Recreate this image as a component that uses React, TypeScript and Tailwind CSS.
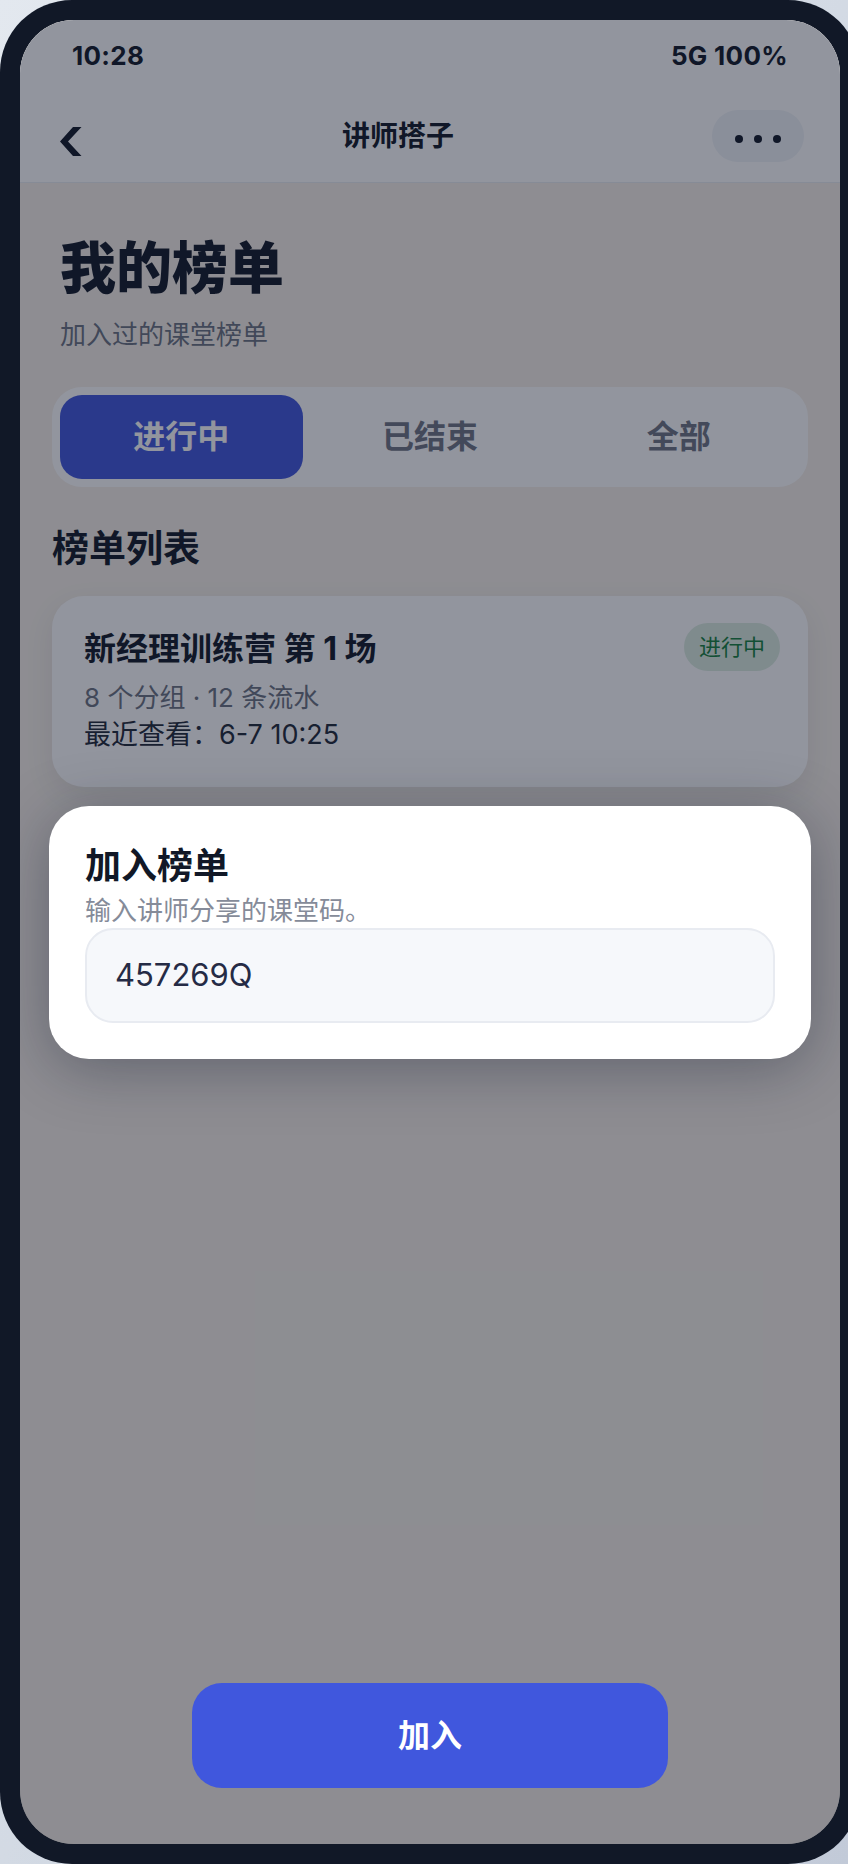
export default function App() {
  return (
    <div className="w-[848px] h-[1864px] overflow-hidden bg-gradient-to-br from-[#e3e8ef] via-[#d3dae4] to-[#c2cad8] [font-family:Inter,'Noto_Sans_CJK_SC',sans-serif]">
      <div className="w-[860px] h-[1864px] rounded-[72px] bg-[#111827] p-[20px]">
        <div className="relative h-full w-full overflow-hidden rounded-[54px] bg-[#f7f1e9]">
          {/* header */}
          <div className="bg-white border-b border-[#e9ecf1]">
            <div className="h-[70px] px-[52px] flex items-center justify-between text-[26px] tracking-[0.3px] font-bold text-[#111827]">
              <span>10:28</span>
              <span>5G 100%</span>
            </div>
            <div className="h-[92px] flex items-center pl-[40px] pr-[36px]">
              <div className="w-[24px] flex items-center">
                <svg width="22" height="30" viewBox="0 0 22 30" className="translate-y-[6px]">
                  <polygon points="13,0 21.5,0 8,14.5 21.5,29 13,29 0,14.5" fill="#111827" />
                </svg>
              </div>
              <div className="flex-1 text-center text-[28px] leading-[36px] font-bold text-[#111827]">讲师搭子</div>
              <div className="w-[92px] h-[52px] rounded-full bg-[#f1f4f8] flex items-center justify-center gap-[11px] pt-[5px]">
                <span className="w-[8px] h-[8px] rounded-full bg-[#111827]" />
                <span className="w-[8px] h-[8px] rounded-full bg-[#111827]" />
                <span className="w-[8px] h-[8px] rounded-full bg-[#111827]" />
              </div>
            </div>
          </div>

          {/* content */}
          <div className="px-[32px]">
            <div className="px-[8px] pt-[53px]">
              <h1 className="text-[56px] leading-[64px] font-extrabold text-[#111827]">我的榜单</h1>
              <p className="mt-[18px] text-[26px] leading-[34px] text-[#6b7280]">加入过的课堂榜单</p>
            </div>
            <div className="mt-[35px] h-[100px] rounded-[30px] bg-white p-[8px] flex gap-[6px]">
              <div className="flex-1 rounded-[22px] bg-[#4057dd] text-white text-[32px] font-bold flex items-center justify-center">进行中</div>
              <div className="flex-1 text-[#6f7483] text-[32px] font-bold flex items-center justify-center">已结束</div>
              <div className="flex-1 text-[#6f7483] text-[32px] font-bold flex items-center justify-center">全部</div>
            </div>
            <h2 className="mt-[40px] text-[37px] leading-[44px] font-bold text-[#111827]">榜单列表</h2>
            <div className="mt-[25px] h-[191px] rounded-[32px] bg-white shadow-[0_10px_30px_rgba(15,23,42,0.08)] px-[32px] pt-[27px] flex items-start justify-between">
              <div className="flex flex-col mt-[6px]">
                <div className="text-[32px] leading-[40px] font-bold text-[#111827]">新经理训练营 第 1 场</div>
                <div className="mt-[11px] text-[26px] leading-[36px] text-[#6b7280]">8 个分组 · 12 条流水</div>
                <div className="mt-[1px] text-[27px] leading-[36px] text-[#1f2937]">最近查看：6-7 10:25</div>
              </div>
              <div className="h-[48px] w-[96px] mr-[-4px] rounded-full bg-[#dcede0] text-[22px] text-[#15803d] flex items-center justify-center">进行中</div>
            </div>
          </div>

          {/* overlay */}
          <div className="absolute inset-0 bg-[rgba(15,23,42,0.455)]" />

          {/* dialog */}
          <div className="absolute left-[29px] right-[29px] top-[786px] rounded-[40px] bg-white px-[36px] pt-[38px] pb-[36px] shadow-[0_10px_60px_rgba(15,23,42,0.35)]">
            <div className="text-[36px] leading-[44px] font-bold text-[#111827]">加入榜单</div>
            <div className="mt-[7px] text-[26px] leading-[32px] text-[#858b99]">输入讲师分享的课堂码。</div>
            <div className="mt-[1px] h-[95px] rounded-[28px] border-2 border-[#e8ebf1] bg-[#f6f8fb] flex items-center pl-[28px] text-[31px] text-[#252b45]">457269Q</div>
          </div>

          {/* bottom button */}
          <div className="absolute bottom-[56px] left-1/2 -translate-x-1/2 w-[476px] h-[105px] rounded-[30px] bg-[#4057dd] flex items-center justify-center text-white text-[32px] font-bold">加入</div>
        </div>
      </div>
    </div>
  );
}
